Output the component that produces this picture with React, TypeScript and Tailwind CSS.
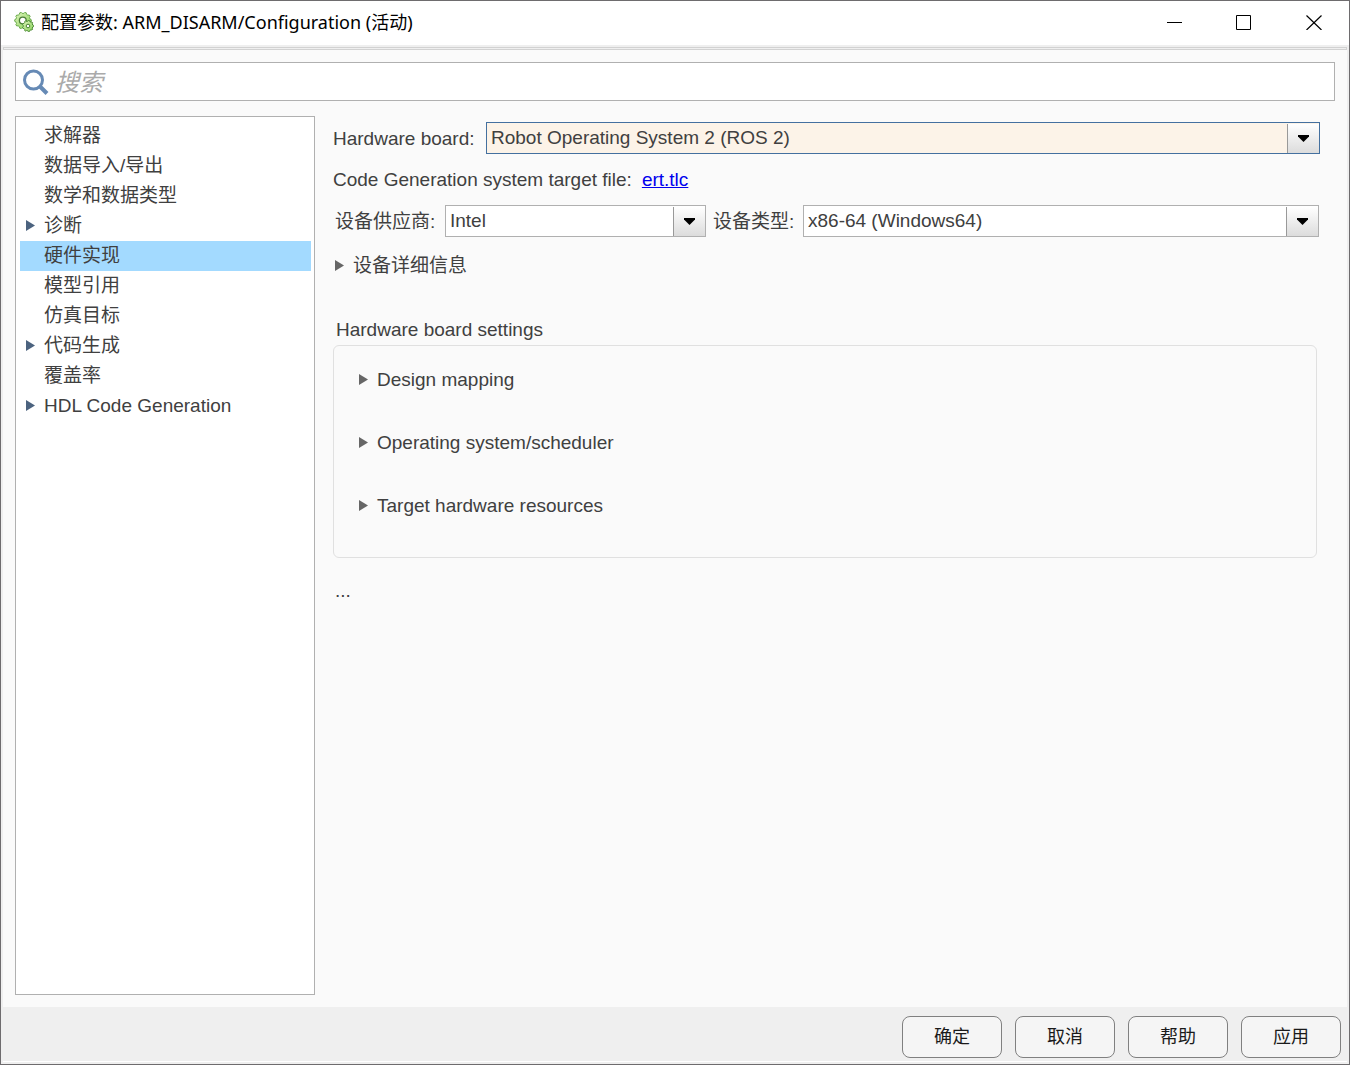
import { useState } from "react";
import type { ReactNode } from "react";

const treeItems = [
  { label: "求解器", expandable: false },
  { label: "数据导入/导出", expandable: false },
  { label: "数学和数据类型", expandable: false },
  { label: "诊断", expandable: true },
  { label: "硬件实现", expandable: false },
  { label: "模型引用", expandable: false },
  { label: "仿真目标", expandable: false },
  { label: "代码生成", expandable: true },
  { label: "覆盖率", expandable: false },
  { label: "HDL Code Generation", expandable: true },
];

const boardSections = [
  "Design mapping",
  "Operating system/scheduler",
  "Target hardware resources",
];

const footerButtons = ["确定", "取消", "帮助", "应用"];

// Outline of a gear with rounded teeth
const gearPoints = (cx: number, cy: number, outer: number, inner: number, teeth: number) => {
  const points: string[] = [];
  for (let i = 0; i < teeth; i++) {
    [-0.3, -0.16, 0.16, 0.3].forEach((offset, j) => {
      const angle = ((i + offset) / teeth) * Math.PI * 2;
      const r = j === 1 || j === 2 ? outer : inner;
      points.push(`${cx + r * Math.cos(angle)},${cy + r * Math.sin(angle)}`);
    });
  }
  return points.join(" ");
};

const AppIcon = () => (
  <svg className="w-5 h-5 shrink-0" viewBox="0 0 20 20" aria-hidden="true">
    <defs>
      <linearGradient id="gear" x1="0" y1="0" x2="1" y2="1">
        <stop offset="0" stopColor="#e0f4bd" />
        <stop offset="1" stopColor="#86d257" />
      </linearGradient>
    </defs>
    <polygon
      points={gearPoints(9, 8.5, 8.3, 7.2, 10)}
      fill="url(#gear)"
      stroke="#6bab4c"
      strokeLinejoin="round"
    />
    <circle cx="8.8" cy="8.5" r="3.4" fill="#fff" stroke="#4b7d38" strokeWidth="1.3" />
    <polygon
      points={gearPoints(14, 14, 5.6, 4.8, 9)}
      fill="url(#gear)"
      stroke="#4b8a35"
      strokeLinejoin="round"
    />
    <circle cx="14" cy="14" r="1.8" fill="#fff" stroke="#4b8236" />
  </svg>
);

const SearchIcon = () => (
  <svg className="w-[26px] h-[26px] shrink-0" viewBox="0 0 26 26" fill="none" aria-hidden="true">
    <circle cx="10.5" cy="11" r="9" stroke="#668ab5" strokeWidth="3" />
    <path d="M17 17.5l7 7" stroke="#668ab5" strokeWidth="4" />
  </svg>
);

const Triangle = ({ className }: { className: string }) => (
  <svg className={`w-[9px] h-[12px] shrink-0 ${className}`} viewBox="0 0 9 12" aria-hidden="true">
    <path d="M0 0l9 5.5-9 5.5z" fill="currentColor" />
  </svg>
);

type ComboBoxProps = {
  id: string;
  value: string;
  focused?: boolean;
  className: string;
};

const ComboBox = ({ id, value, focused, className }: ComboBoxProps) => (
  <div
    className={`relative h-8 border ${
      focused ? "border-[#44709f] bg-[#fcf3e8]" : "border-[#b0b0b0] bg-white"
    } ${className}`}
  >
    <select
      id={id}
      defaultValue={value}
      className="block w-full h-[30px] pl-1 pr-9 appearance-none bg-transparent outline-none"
    >
      <option value={value}>{value}</option>
    </select>
    <span className="absolute top-px bottom-0 right-0 w-8 flex items-center justify-center border-l border-[#999] bg-gradient-to-b from-white to-[#dcdcdc] pointer-events-none">
      <svg className="w-[11px] h-[7px]" viewBox="0 0 11 7" aria-hidden="true">
        <path d="M0 0h11v1.5L5.5 7 0 1.5z" fill="#000" />
      </svg>
    </span>
  </div>
);

const Section = ({ children }: { children: ReactNode }) => (
  <button type="button" aria-expanded="false" className="flex items-center h-[30px]">
    <Triangle className="text-[#666]" />
    <span className="ml-[9px]">{children}</span>
  </button>
);

const TitleBar = () => (
  <header className="flex items-center h-11 pl-[13px] pb-[2px] bg-white">
    <AppIcon />
    <h1 className="flex-1 ml-[7px] font-['Noto_Sans','Noto_Sans_CJK_SC',sans-serif] text-[18px] leading-6 text-black">
      配置参数: ARM_DISARM/Configuration (活动)
    </h1>
    <div className="flex h-full">
      <button type="button" aria-label="最小化" className="w-[69px] flex items-center justify-center">
        <svg className="w-4 h-4" viewBox="0 0 16 16" stroke="#000">
          <path d="M0 8.5h15" />
        </svg>
      </button>
      <button type="button" aria-label="最大化" className="w-[69px] flex items-center justify-center">
        <svg className="w-4 h-4" viewBox="0 0 16 16" stroke="#000" fill="none">
          <path d="M.5 1.5h14v14H.5z" />
        </svg>
      </button>
      <button type="button" aria-label="关闭" className="w-[71px] flex items-center justify-center">
        <svg className="w-4 h-4" viewBox="0 0 16 16" stroke="#000" strokeWidth="1.2">
          <path d="M.5 1.5l15 14.5M15.5 1.5l-15 14.5" />
        </svg>
      </button>
    </div>
  </header>
);

const App = () => {
  const [selected, setSelected] = useState("硬件实现");

  return (
    <div className="min-h-screen flex flex-col border border-[#6e6c6e] bg-[#efefef] font-['Liberation_Sans','Noto_Sans_CJK_SC',sans-serif] text-[19px] leading-[30px] text-[#404040]">
      <TitleBar />

      <div className="flex-1 flex flex-col m-[2px]">
        <div className="h-[3px] border border-[#d2d2d2]" />

        <div className="flex-1 flex flex-col p-3 bg-[#fafafa]">
          {/* Search */}
          <label className="flex items-center h-[39px] px-[7px] border border-[#b0b0b0] bg-white">
            <SearchIcon />
            <input
              type="text"
              placeholder="搜索"
              aria-label="搜索"
              className="flex-1 ml-[6px] pt-[3px] text-[24px] outline-none placeholder:italic placeholder:text-[#aaa]"
            />
          </label>

          <div className="flex-1 flex mt-[15px]">
            {/* Category tree */}
            <nav className="w-[300px] shrink-0 border border-[#b0b0b0] bg-white pt-1 pl-1 pr-[3px]">
              <ul>
                {treeItems.map((item) => (
                  <li key={item.label}>
                    <button
                      type="button"
                      onClick={() => setSelected(item.label)}
                      className={`flex items-center w-full h-[30px] pl-[6px] text-left ${
                        item.label === selected ? "bg-[#a3daff]" : ""
                      }`}
                    >
                      <span className="flex w-[18px]">
                        {item.expandable && <Triangle className="text-[#4c637f]" />}
                      </span>
                      {item.label}
                    </button>
                  </li>
                ))}
              </ul>
            </nav>

            {/* Hardware implementation pane */}
            <main className="flex-1 min-w-0 ml-[18px] mr-[15px] pt-[6px]">
              <div className="flex items-center">
                <label htmlFor="board" className="w-[153px] shrink-0 pt-[2px]">
                  Hardware board:
                </label>
                <ComboBox
                  id="board"
                  value="Robot Operating System 2 (ROS 2)"
                  focused
                  className="flex-1"
                />
              </div>

              <p className="mt-[11px]">
                Code Generation system target file:
                <a href="#ert" className="ml-[10px] text-[#0000ee] underline">
                  ert.tlc
                </a>
              </p>

              <div className="flex items-center mt-[10px] pr-px">
                <label htmlFor="vendor" className="w-28 shrink-0 pt-[2px] pl-[2px]">
                  设备供应商:
                </label>
                <ComboBox id="vendor" value="Intel" className="w-[261px]" />
                <label htmlFor="type" className="w-[97px] shrink-0 pt-[2px] pl-[7px]">
                  设备类型:
                </label>
                <ComboBox id="type" value="x86-64 (Windows64)" className="flex-1" />
              </div>

              <div className="mt-[14px] pl-[2px]">
                <Section>设备详细信息</Section>
              </div>

              <h2 className="mt-[34px] pl-[3px]">Hardware board settings</h2>
              <div className="flex flex-col items-start gap-[33px] mr-[3px] pt-[19px] pb-9 pl-[25px] border border-[#e0e0e0] rounded-md">
                {boardSections.map((name) => (
                  <Section key={name}>{name}</Section>
                ))}
              </div>

              <p className="mt-[18px] pl-[2px]">...</p>
            </main>
          </div>
        </div>

        {/* Dialog buttons */}
        <footer className="flex justify-end items-center gap-[13px] h-[55px] pr-[6px] pt-[6px] pb-px border-b border-white">
          {footerButtons.map((label) => (
            <button
              key={label}
              type="button"
              className="w-[100px] h-[42px] border border-[#808080] rounded-lg bg-[#f5f5f5] text-[18px] text-[#1a1a1a]"
            >
              {label}
            </button>
          ))}
        </footer>
      </div>
    </div>
  );
};

export default App;
